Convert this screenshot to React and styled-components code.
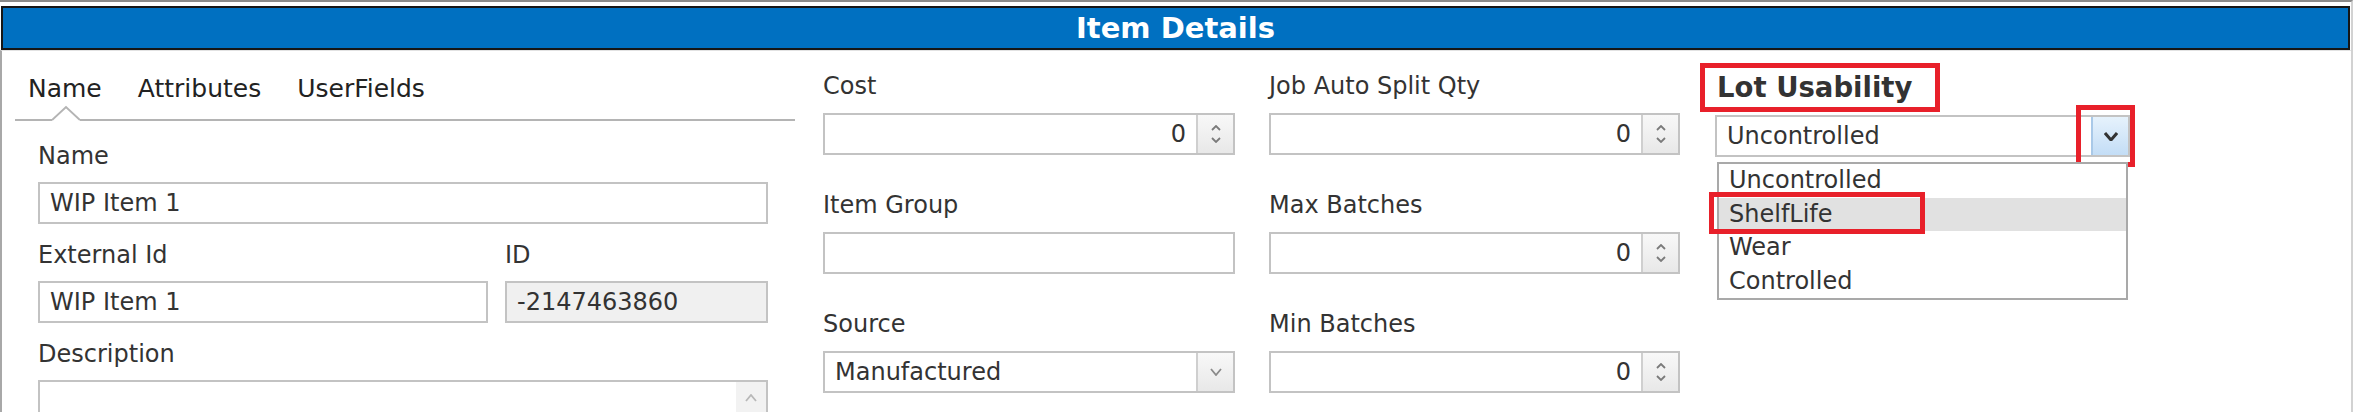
import styled, { createGlobalStyle } from "styled-components";

const GlobalStyle = createGlobalStyle`
  html, body { margin: 0; padding: 0; background: #fff; }
  body { font-family: "DejaVu Sans", Verdana, sans-serif; color: #333; }
`;

const Frame = styled.div`
  width: 2353px;
  height: 412px;
  box-sizing: border-box;
  border-top: 2px solid #8a8a8a;
  border-right: 2px solid #d2d2d2;
  overflow: hidden;
  display: flex;
  flex-direction: column;
`;

const TitleBar = styled.div`
  margin: 4px 1px 0 1px;
  height: 40px;
  border: 2px solid #161616;
  background: #0070c1;
  color: #fff;
  font-weight: bold;
  font-size: 29px;
  line-height: 40px;
  text-align: center;
`;

const Body = styled.div`
  flex: 1;
  display: flex;
  border-left: 2px solid #a8a8a8;
  border-top: 1px solid #e2e2e2;
`;

const TabPane = styled.div`
  margin-left: 13px;
  width: 780px;
`;

const TabStrip = styled.div`
  position: relative;
  display: flex;
  padding: 23px 0 15px 13px;
  border-bottom: 2px solid #b4b4b4;
`;

const Tab = styled.div`
  font-size: 25px;
  line-height: 30px;
  color: #222;
  margin-right: 36px;
`;

const Notch = styled.svg`
  position: absolute;
  left: 37px;
  bottom: -2px;
`;

const Fields = styled.div`
  padding: 20px 0 0 23px;
  width: 730px;
`;

const Column = styled.div`
  position: relative;
  margin-left: ${(p) => p.$offset}px;
  width: ${(p) => p.$width}px;
  padding-top: ${(p) => p.$top || 20}px;
`;

const Group = styled.div`
  margin-bottom: ${(p) => p.$space}px;
`;

const Label = styled.div`
  font-size: 24px;
  line-height: 30px;
  color: #333;
  margin-bottom: ${(p) => p.$gap}px;
`;

const Pair = styled.div`
  display: grid;
  grid-template-columns: 450px 263px;
  column-gap: 17px;
`;

const Box = styled.div`
  position: relative;
  display: flex;
  height: 42px;
  box-sizing: border-box;
  border: 2px solid #c3c3c3;
  background: ${(p) => (p.$muted ? "#f0f0f0" : "#fff")};
`;

const Value = styled.div`
  flex: 1;
  padding: 0 10px;
  font-size: 24px;
  line-height: 38px;
  color: #333;
  text-align: ${(p) => p.$align || "left"};
  white-space: nowrap;
`;

const Spinner = styled.div`
  width: 35px;
  border-left: 2px solid #cfcfcf;
  background: linear-gradient(#f8f8f8, #e8e8e8);
  display: flex;
  flex-direction: column;
  align-items: center;
  justify-content: center;
  gap: 6px;
`;

const DropButton = styled.div`
  position: relative;
  width: 35px;
  border-left: 2px solid ${(p) => (p.$active ? "#a9c9e8" : "#cfcfcf")};
  background: ${(p) =>
    p.$active ? "linear-gradient(#e6f2fc, #c3ddf6)" : "linear-gradient(#f8f8f8, #e8e8e8)"};
  display: flex;
  align-items: center;
  justify-content: center;
`;

const TextArea = styled.div`
  display: flex;
  height: 80px;
  box-sizing: border-box;
  border: 2px solid #c3c3c3;
`;

const ScrollTrack = styled.div`
  margin-left: auto;
  width: 30px;
  background: #f2f2f2;
  display: flex;
  justify-content: center;
  padding-top: 12px;
`;

const Marked = styled.div`
  box-sizing: border-box;
  width: 240px;
  height: 49px;
  margin-left: -15px;
  border: 5px solid #e8202a;
  padding-left: 12px;
  font-size: 27.5px;
  font-weight: bold;
  line-height: 39px;
  color: #333;
`;

const Callout = styled.div`
  position: absolute;
  top: ${(p) => p.$top}px;
  bottom: ${(p) => p.$bottom}px;
  left: ${(p) => p.$left}px;
  right: ${(p) => p.$right}px;
  border: 5px solid #e8202a;
  pointer-events: none;
`;

const ListBox = styled.div`
  position: absolute;
  left: 0;
  top: 45px;
  width: 411px;
  box-sizing: border-box;
  border: 2px solid #a9a9a9;
  background: #fff;
`;

const Option = styled.div`
  position: relative;
  height: 33.5px;
  padding-left: 10px;
  font-size: 24px;
  line-height: 33px;
  color: #333;
  background: ${(p) => (p.$hover ? "#e1e1e1" : "transparent")};
`;

const Chevron = ({ up, color = "#7a7a7a", w = 10, h = 6, sw = 1.8 }) => (
  <svg width={w} height={h} viewBox={`0 0 ${w} ${h}`}>
    <polyline
      points={up ? `1,${h - 1} ${w / 2},1 ${w - 1},${h - 1}` : `1,1 ${w / 2},${h - 1} ${w - 1},1`}
      fill="none"
      stroke={color}
      strokeWidth={sw}
    />
  </svg>
);

const NumberBox = ({ value }) => (
  <Box>
    <Value $align="right">{value}</Value>
    <Spinner>
      <Chevron up />
      <Chevron />
    </Spinner>
  </Box>
);

const Field = ({ label, children, space = 35, gap = 12 }) => (
  <Group $space={space}>
    <Label $gap={gap}>{label}</Label>
    {children}
  </Group>
);

const lotOptions = ["Uncontrolled", "ShelfLife", "Wear", "Controlled"];

export default function App() {
  return (
    <>
      <GlobalStyle />
      <Frame>
        <TitleBar>Item Details</TitleBar>
        <Body>
          <TabPane>
            <TabStrip>
              <Tab>Name</Tab>
              <Tab>Attributes</Tab>
              <Tab>UserFields</Tab>
              <Notch width="28" height="16" viewBox="0 0 28 16">
                <polygon points="0,14 14,1 28,14 28,16 0,16" fill="#fff" />
                <polyline points="0,15 14,2 28,15" fill="none" stroke="#b4b4b4" strokeWidth="2" />
              </Notch>
            </TabStrip>
            <Fields>
              <Field label="Name" space={16} gap={11}>
                <Box>
                  <Value>WIP Item 1</Value>
                </Box>
              </Field>
              <Pair>
                <Label $gap={11}>External Id</Label>
                <Label $gap={11}>ID</Label>
                <Box>
                  <Value>WIP Item 1</Value>
                </Box>
                <Box $muted>
                  <Value>-2147463860</Value>
                </Box>
              </Pair>
              <Group $space={0} style={{ marginTop: 16 }}>
                <Label $gap={11}>Description</Label>
                <TextArea>
                  <ScrollTrack>
                    <Chevron up color="#b8b8b8" w={12} h={8} />
                  </ScrollTrack>
                </TextArea>
              </Group>
            </Fields>
          </TabPane>

          <Column $offset={28} $width={412}>
            <Field label="Cost">
              <NumberBox value="0" />
            </Field>
            <Field label="Item Group">
              <Box />
            </Field>
            <Field label="Source">
              <Box>
                <Value>Manufactured</Value>
                <DropButton>
                  <Chevron w={12} h={8} color="#8a8a8a" />
                </DropButton>
              </Box>
            </Field>
          </Column>

          <Column $offset={34} $width={411}>
            <Field label="Job Auto Split Qty">
              <NumberBox value="0" />
            </Field>
            <Field label="Max Batches">
              <NumberBox value="0" />
            </Field>
            <Field label="Min Batches">
              <NumberBox value="0" />
            </Field>
          </Column>

          <Column $offset={35} $width={415} $top={12}>
            <Marked>Lot Usability</Marked>
            <Box style={{ marginTop: 3 }}>
              <Value>Uncontrolled</Value>
              <DropButton $active>
                <Chevron w={14} h={9} color="#333" sw={3} />
                <Callout $top={-12} $bottom={-12} $left={-17} $right={-7} />
              </DropButton>
              <ListBox>
                {lotOptions.map((opt) => (
                  <Option key={opt} $hover={opt === "ShelfLife"}>
                    {opt}
                    {opt === "ShelfLife" && (
                      <Callout $top={-6} $bottom={-3} $left={-10} $right={201} />
                    )}
                  </Option>
                ))}
              </ListBox>
            </Box>
          </Column>
        </Body>
      </Frame>
    </>
  );
}
